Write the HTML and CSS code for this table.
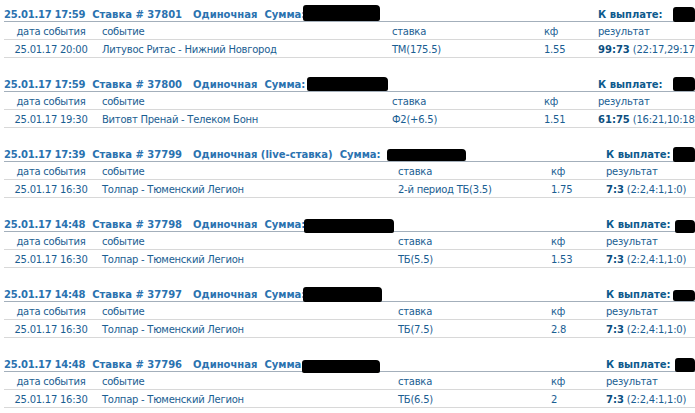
FILE: index.html
```html
<!DOCTYPE html>
<html lang="ru">
<head>
<meta charset="utf-8">
<title>Ставки</title>
<link rel="stylesheet" href="styles.css">
</head>
<body>
<main class="page">

  <section class="bet bet-a">
    <div class="bet-head">
      <div class="head-main"><span class="h-date">25.01.17 17:59</span><span class="h-num">Ставка # 37801</span><span class="h-type">Одиночная</span><span class="h-sum">Сумма:</span></div>
      <div class="head-pay">К выплате:</div>
    </div>
    <div class="bet-row">
      <div class="c-date">дата события</div><div>событие</div><div>ставка</div><div>кф</div><div>результат</div>
    </div>
    <div class="bet-row">
      <div class="c-date">25.01.17 20:00</div><div>Литувос Ритас - Нижний Новгород</div><div>ТМ(175.5)</div><div>1.55</div><div class="c-res"><b>99:73</b> (22:17,29:17,24:20,24:19)</div>
    </div>
    <span class="redact rl-1"></span><span class="redact rr-1"></span>
  </section>

  <section class="bet bet-a">
    <div class="bet-head">
      <div class="head-main"><span class="h-date">25.01.17 17:59</span><span class="h-num">Ставка # 37800</span><span class="h-type">Одиночная</span><span class="h-sum">Сумма:</span></div>
      <div class="head-pay">К выплате:</div>
    </div>
    <div class="bet-row">
      <div class="c-date">дата события</div><div>событие</div><div>ставка</div><div>кф</div><div>результат</div>
    </div>
    <div class="bet-row">
      <div class="c-date">25.01.17 19:30</div><div>Витовт Пренай - Телеком Бонн</div><div>Ф2(+6.5)</div><div>1.51</div><div class="c-res"><b>61:75</b> (16:21,10:18,19:16,16:20)</div>
    </div>
    <span class="redact rl-2"></span><span class="redact rr-2"></span>
  </section>

  <section class="bet bet-b">
    <div class="bet-head">
      <div class="head-main"><span class="h-date">25.01.17 17:39</span><span class="h-num">Ставка # 37799</span><span class="h-type">Одиночная (live-ставка)</span><span class="h-sum">Сумма:</span></div>
      <div class="head-pay">К выплате:</div>
    </div>
    <div class="bet-row">
      <div class="c-date">дата события</div><div>событие</div><div>ставка</div><div>кф</div><div>результат</div>
    </div>
    <div class="bet-row">
      <div class="c-date">25.01.17 16:30</div><div>Толпар - Тюменский Легион</div><div>2-й период ТБ(3.5)</div><div>1.75</div><div class="c-res"><b>7:3</b> (2:2,4:1,1:0)</div>
    </div>
    <span class="redact rl-3"></span><span class="redact rr-3"></span>
  </section>

  <section class="bet bet-b">
    <div class="bet-head">
      <div class="head-main"><span class="h-date">25.01.17 14:48</span><span class="h-num">Ставка # 37798</span><span class="h-type">Одиночная</span><span class="h-sum">Сумма:</span></div>
      <div class="head-pay">К выплате:</div>
    </div>
    <div class="bet-row">
      <div class="c-date">дата события</div><div>событие</div><div>ставка</div><div>кф</div><div>результат</div>
    </div>
    <div class="bet-row">
      <div class="c-date">25.01.17 16:30</div><div>Толпар - Тюменский Легион</div><div>ТБ(5.5)</div><div>1.53</div><div class="c-res"><b>7:3</b> (2:2,4:1,1:0)</div>
    </div>
    <span class="redact rl-4"></span><span class="redact rr-4"></span>
  </section>

  <section class="bet bet-b">
    <div class="bet-head">
      <div class="head-main"><span class="h-date">25.01.17 14:48</span><span class="h-num">Ставка # 37797</span><span class="h-type">Одиночная</span><span class="h-sum">Сумма:</span></div>
      <div class="head-pay">К выплате:</div>
    </div>
    <div class="bet-row">
      <div class="c-date">дата события</div><div>событие</div><div>ставка</div><div>кф</div><div>результат</div>
    </div>
    <div class="bet-row">
      <div class="c-date">25.01.17 16:30</div><div>Толпар - Тюменский Легион</div><div>ТБ(7.5)</div><div>2.8</div><div class="c-res"><b>7:3</b> (2:2,4:1,1:0)</div>
    </div>
    <span class="redact rl-5"></span><span class="redact rr-5"></span>
  </section>

  <section class="bet bet-b">
    <div class="bet-head">
      <div class="head-main"><span class="h-date">25.01.17 14:48</span><span class="h-num">Ставка # 37796</span><span class="h-type">Одиночная</span><span class="h-sum">Сумма:</span></div>
      <div class="head-pay">К выплате:</div>
    </div>
    <div class="bet-row">
      <div class="c-date">дата события</div><div>событие</div><div>ставка</div><div>кф</div><div>результат</div>
    </div>
    <div class="bet-row">
      <div class="c-date">25.01.17 16:30</div><div>Толпар - Тюменский Легион</div><div>ТБ(6.5)</div><div>2</div><div class="c-res"><b>7:3</b> (2:2,4:1,1:0)</div>
    </div>
    <span class="redact rl-6"></span><span class="redact rr-6"></span>
  </section>

</main>
</body>
</html>
```
FILE: styles.css
```css
html, body {
  margin: 0;
  padding: 0;
  background: #ffffff;
  overflow: hidden;
}

.page {
  padding-left: 4px;
  font-family: "DejaVu Sans", sans-serif;
  font-size: 10px;
  letter-spacing: -0.25px;
  color: #1a5e92;
}

.bet {
  position: relative;
  margin-bottom: 12px;
}

.bet-head,
.bet-row {
  display: grid;
  white-space: nowrap;
}

.bet-a .bet-head,
.bet-a .bet-row {
  grid-template-columns: 98px 290px 152px 54px minmax(0, 1fr);
}

.bet-b .bet-head,
.bet-b .bet-row {
  grid-template-columns: 98px 296px 153px 55px minmax(0, 1fr);
}

.bet-head {
  padding-top: 8px;
  height: 13px;
  line-height: 13px;
  border-bottom: 1px solid #a3afbb;
  font-weight: bold;
  letter-spacing: 0;
  color: #2a72b0;
}

.head-main {
  grid-column: 1 / 5;
}

.head-pay {
  grid-column: 5;
  color: #0e5a8d;
}

.h-date { letter-spacing: -0.25px; }
.h-num { margin-left: 7px; }
.h-type { margin-left: 11px; }
.h-sum { margin-left: 7px; }

.bet-row {
  padding-top: 2px;
  height: 15px;
  line-height: 15px;
  border-bottom: 1px solid #d8d8d8;
}

.c-date {
  text-align: center;
  padding-right: 8px;
  padding-left: 4px;
}

.c-res b {
  color: #0d4f80;
  letter-spacing: 0;
}

.redact {
  position: absolute;
  background: #000000;
  border-radius: 3px 4px 2px 2px;
}

.rr-1, .rr-2, .rr-3, .rr-5 { right: 0; width: 22px; }
.rr-4, .rr-6 { right: 0; width: 20px; }

.rl-1 { left: 299px; top: 5px;  width: 77px; height: 16px; }
.rr-1 { top: 7px; height: 15px; }

.rl-2 { left: 303px; top: 7px;  width: 81px; height: 14px; }
.rr-2 { top: 7px; height: 14px; }

.rl-3 { left: 383px; top: 9px;  width: 79px; height: 12px; }
.rr-3 { top: 7px; height: 15px; }

.rl-4 { left: 300px; top: 9px;  width: 90px; height: 14px; }
.rr-4 { top: 10px; height: 13px; }

.rl-5 { left: 299px; top: 7px;  width: 79px; height: 15px; }
.rr-5 { top: 10px; height: 11px; }

.rl-6 { left: 298px; top: 10px; width: 78px; height: 13px; }
.rr-6 { top: 8px; height: 14px; }
```
